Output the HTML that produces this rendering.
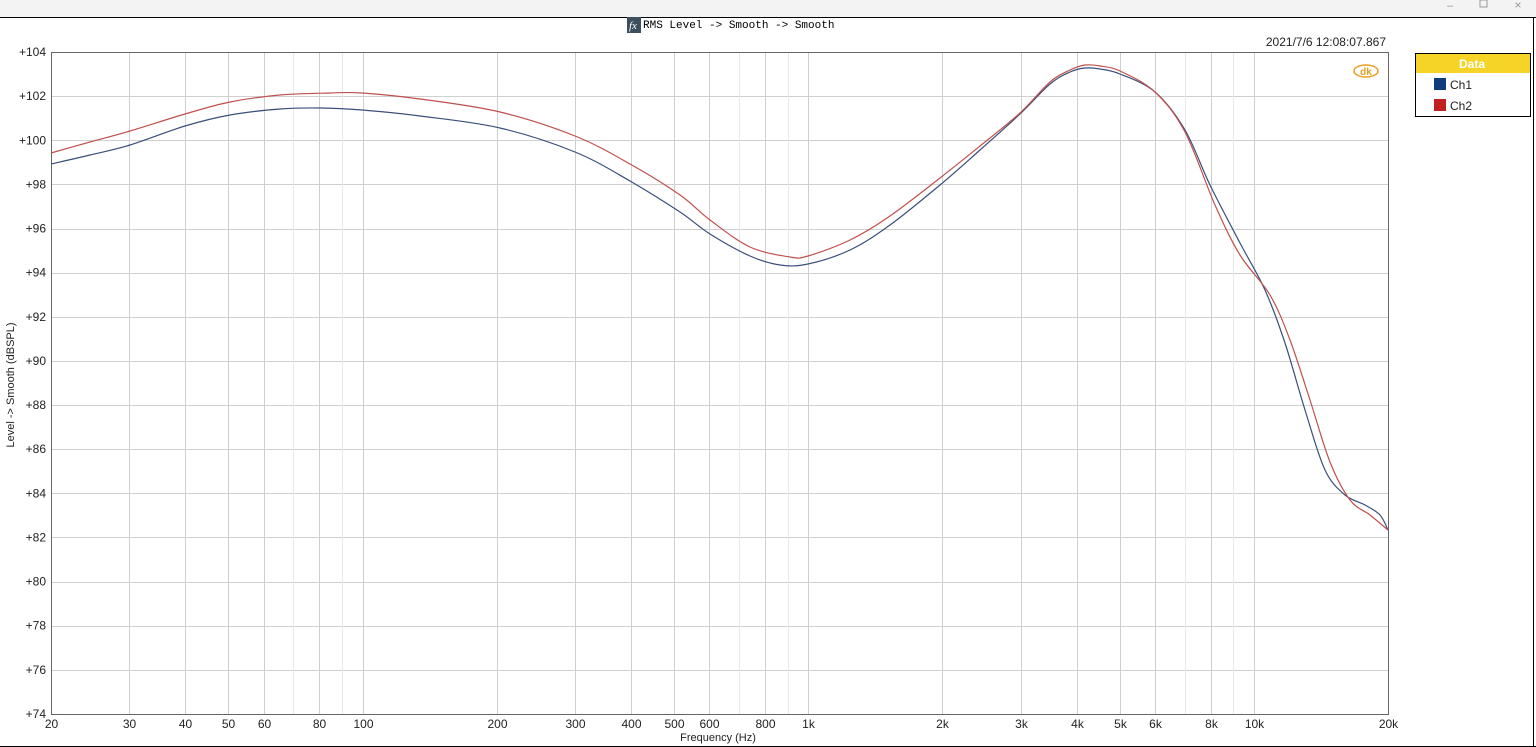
<!DOCTYPE html>
<html><head><meta charset="utf-8"><style>
html,body{margin:0;padding:0;width:1536px;height:747px;overflow:hidden;background:#fff;font-family:"Liberation Sans",sans-serif}
</style></head><body>
<svg id="s" width="1536" height="747" xmlns="http://www.w3.org/2000/svg" style="position:absolute;left:0;top:0">
<rect x="0" y="0" width="1536" height="17" fill="#f3f3f3"/>
<line x1="0" y1="17.5" x2="1536" y2="17.5" stroke="#000"/>
<line x1="0" y1="746.5" x2="1536" y2="746.5" stroke="#000"/>
<line x1="1533.5" y1="17" x2="1533.5" y2="747" stroke="#000"/>
<text x="1450" y="9" font-size="11" fill="#999" text-anchor="middle">–</text>
<rect x="1480" y="0" width="7" height="7" fill="none" stroke="#999"/>
<text x="1518" y="9" font-size="12" fill="#999" text-anchor="middle">×</text>
<rect x="627" y="17" width="14" height="16" fill="#3d4f5c"/>
<text x="629" y="29" font-size="11" fill="#fff" font-style="italic" font-family="Liberation Serif,serif">fx</text>
<text x="643" y="28" font-size="11" font-family="Liberation Mono,monospace" fill="#000">RMS Level -&gt; Smooth -&gt; Smooth</text>
<text x="1386" y="46" font-size="12" text-anchor="end" fill="#222">2021/7/6 12:08:07.867</text>
<g id="grid"></g>
<rect x="51.5" y="52.5" width="1337" height="662" fill="none" stroke="#666"/>
<ellipse cx="1366" cy="71" rx="12" ry="6" fill="none" stroke="#e8a020" stroke-width="1.5"/>
<text x="1366" y="75" font-size="10" fill="#e8a020" text-anchor="middle" font-weight="bold">dk</text>
<path id="b" fill="none" stroke="#3b4f7a" stroke-width="1.2"/>
<path id="r" fill="none" stroke="#c0504d" stroke-width="1.2"/>
<rect x="1415.5" y="53.5" width="115" height="63" fill="#fff" stroke="#000"/>
<rect x="1416" y="54" width="114" height="19" fill="#f5d327"/>
<text x="1472" y="68" font-size="12" font-weight="bold" fill="#fff" text-anchor="middle">Data</text>
<rect x="1434" y="78" width="12" height="12" fill="#123a7e"/>
<text x="1450" y="89" font-size="12" fill="#222">Ch1</text>
<rect x="1434" y="99" width="12" height="12" fill="#c02020"/>
<text x="1450" y="110" font-size="12" fill="#222">Ch2</text>
<text x="718" y="741" font-size="11" text-anchor="middle" fill="#222">Frequency (Hz)</text>
<text transform="translate(14,385) rotate(-90)" font-size="11" text-anchor="middle" fill="#222">Level -&gt; Smooth (dBSPL)</text>
</svg>
<script>
var g=document.getElementById('grid'),ns='http://www.w3.org/2000/svg',s=document.getElementById('s');
function el(t,a,txt,p){var e=document.createElementNS(ns,t);for(var k in a)e.setAttribute(k,a[k]);if(txt)e.textContent=txt;(p||g).appendChild(e);return e;}
function X(f){return 51+445.67*Math.log10(f/20);}
for(var d=74;d<=104;d+=2){var y=52+(104-d)*22.067;
 if(d>74&&d<104)el('line',{x1:51,x2:1388,y1:Math.round(y)+.5,y2:Math.round(y)+.5,stroke:'#d0d0d0'});
 el('text',{x:46,y:y+4,'font-size':12,'text-anchor':'end',fill:'#222'},'+'+d,s);}
var labels={20:'20',30:'30',40:'40',50:'50',60:'60',80:'80',100:'100',200:'200',300:'300',400:'400',500:'500',600:'600',800:'800',1000:'1k',2000:'2k',3000:'3k',4000:'4k',5000:'5k',6000:'6k',8000:'8k',10000:'10k',20000:'20k'};
[20,30,40,50,60,70,80,90,100,200,300,400,500,600,700,800,900,1000,2000,3000,4000,5000,6000,7000,8000,9000,10000,20000].forEach(function(f){var x=Math.round(X(f))+.5;
 if(f>20&&f<20000)el('line',{x1:x,x2:x,y1:52,y2:714,stroke:labels[f]?'#cfcfcf':'#e8e8e8'});
 if(labels[f])el('text',{x:x,y:728,'font-size':12,'text-anchor':'middle',fill:'#222'},labels[f],s);});
function smooth(str){var p=str.split(' ').map(function(q){return q.split(',').map(Number);});
 var d='M'+p[0][0]+','+p[0][1];
 for(var i=0;i<p.length-1;i++){var p0=p[i-1]||p[i],p1=p[i],p2=p[i+1],p3=p[i+2]||p2;
  d+=' C'+(p1[0]+(p2[0]-p0[0])/6)+','+(p1[1]+(p2[1]-p0[1])/6)+' '+(p2[0]-(p3[0]-p1[0])/6)+','+(p2[1]-(p3[1]-p1[1])/6)+' '+p2[0]+','+p2[1];}
 return d;}
document.getElementById('b').setAttribute('d',smooth('51,164 90,155 130,145 185,126 230,115 280,109 320,108 362,110 420,116 500,128 575,152 630,181 680,212 710,234 750,256 780,265 808,264 850,250 890,225 940,185 980,150 1020,114 1050,84 1070,72 1085,68 1100,69 1120,74 1155,92 1185,130 1210,185 1240,243 1265,290 1285,343 1305,410 1325,470 1345,495 1365,505 1380,515 1388,530'));
document.getElementById('r').setAttribute('d',smooth('51,153 90,142 130,131 185,114 230,102 280,95 330,93 362,93 420,99 500,112 575,136 630,164 680,195 710,220 750,247 790,257 808,256 850,240 890,216 940,178 980,146 1020,113 1050,82 1070,70 1085,65 1100,66 1120,71 1155,92 1185,132 1215,205 1240,255 1270,295 1290,340 1310,400 1330,462 1350,500 1370,515 1388,530'));
</script>
</body></html>
